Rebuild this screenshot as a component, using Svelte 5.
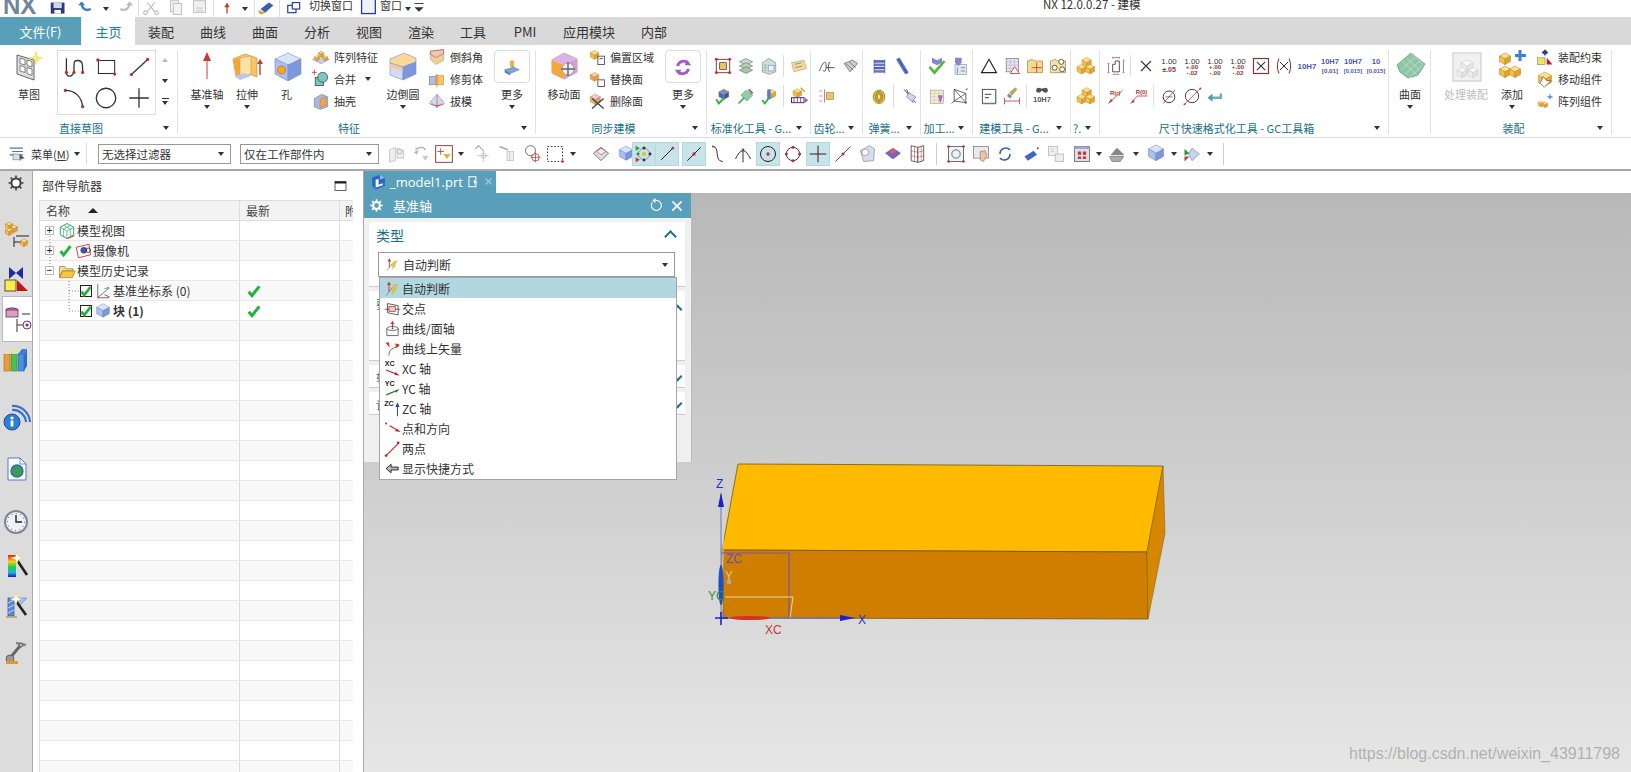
<script>
const P=(p,f,s='none',w=1)=>`<polygon points="${p}" fill="${f}" stroke="${s}" stroke-width="${w}"/>`;
const L=(d,s='#333',w=1.2)=>`<path d="${d}" fill="none" stroke="${s}" stroke-width="${w}"/>`;
const D=(x,y,r=1.5,c='#b5322c')=>`<circle cx="${x}" cy="${y}" r="${r}" fill="${c}"/>`;
const C=(x,y,r,f='none',s='#333',w=1.2)=>`<circle cx="${x}" cy="${y}" r="${r}" fill="${f}" stroke="${s}" stroke-width="${w}"/>`;
const R=(x,y,w,h,f='none',s='none',sw=1)=>`<rect x="${x}" y="${y}" width="${w}" height="${h}" fill="${f}" stroke="${s}" stroke-width="${sw}"/>`;
const T=(x,y,t,s=6,c='#333',b=700)=>`<text x="${x}" y="${y}" font-size="${s}" fill="${c}" font-weight="${b}" text-anchor="middle" font-family="Liberation Sans, sans-serif">${t}</text>`;
const cube=(x,y,s,t='#ffe08f',l='#f5c04a',r='#e6a42c',e='#b98a2e')=>
  P(`${x},${y-s*.55} ${x+s},${y} ${x},${y+s*.55} ${x-s},${y}`,t,e,.6)+
  P(`${x-s},${y} ${x},${y+s*.55} ${x},${y+s*1.55} ${x-s},${y+s}`,l,e,.6)+
  P(`${x+s},${y} ${x},${y+s*.55} ${x},${y+s*1.55} ${x+s},${y+s}`,r,e,.6);
const blue=(x,y,s)=>cube(x,y,s,'#d9e4fb','#a9bff0','#7c97e0','#6b80b8');
const star=(x,y,c='#f7ee6a')=>P(`${x},${y-6} ${x+1.5},${y-1.5} ${x+6},${y} ${x+1.5},${y+1.5} ${x},${y+6} ${x-1.5},${y+1.5} ${x-6},${y} ${x-1.5},${y-1.5}`,c,'#d8c840',.4);
const arrowUp=(x,y,h,c='#c23b36')=>L(`M${x} ${y+3}V${y+h}`,c,1.4)+P(`${x},${y} ${x+3},${y+5} ${x-3},${y+5}`,c);

const I={
 sketch:P('4,5 21,10 21,30 4,24','#dfdfdf','#666')+P('7,8 12,9.5 12,15 7,13.5','#fff','#666',.8)+P('14,10 19,11.5 19,17 14,15.5','#fff','#666',.8)+P('7,15.5 12,17 12,22.5 7,21','#fff','#666',.8)+P('14,17.5 19,19 19,25.5 14,23.5','#fff','#666',.8)+star(23,8)+L('M23 1v14M16 8h14','#f7ee6a',.8),
 spline:L('M5 4V17C5 22 12 22 12 14S12 6 16 6 20 10 20 17','#333',1.2)+D(5,17)+D(12,17)+D(20,17),
 rectd:R(5,6,15,12,'none','#333')+D(4.5,5.5)+D(20,18.5),
 lined:L('M5 19L20 5','#333')+D(5,19)+D(20,5),
 arcd:L('M4 5C13 5 19 11 20 20','#333')+D(4,5)+D(20,20),
 circle:C(12,12,9),
 cross:L('M12 3V21M3 12H21','#333'),
 datum:L('M16 10V29','#d98a85',1.6)+P('16,2 20,11 12,11','#c23b36'),
 extrude:P('2,9 14,4 26,8 26,27 18,24 5,26','#fbc468','#b98a2e',.6)+P('9,8 9,27 5,26 2,9','#f5a63b')+P('9,8 20,6 20,24 9,27','#fde1a8','#d49a3a',.6)+P('3,26 9,30 20,26 14,23','#b9c8ee')+arrowUp(29,9,16),
 hole:P('4,9 17,3 30,9 17,15','#d9e4fb','#7b8fc4',.6)+P('4,9 17,15 17,31 4,24','#a9bff0','#7b8fc4',.6)+P('30,9 17,15 17,31 30,24','#7c97e0','#7b8fc4',.6)+C(10.5,20,4,'#f5a623','#c57a12',.8),
 pattern:P('2,15 12,10 22,15 12,20','#c3d1f3','#7b8fc4',.6)+cube(12,7,3.2)+cube(7,12,3)+cube(17,12,3),
 unite:L('M4 1v6M1 4h6','#c23b36',1)+R(5,10,10,10,'#7fc4c0','#333',.8)+C(14,10,6,'#7fc4c0','#333',.8),
 shell:P('4,9 13,4 20,7 20,19 11,22 4,19','#aab8dd','#667',.6)+P('11,10 18,7 18,17 11,20','#f0a845','#a56',.4),
 blend:P('3,9 17,3 29,8 29,12 16,17 3,13','#f9d89a','#7b8fc4',.6)+P('3,13 16,17 16,30 3,25','#d3dcf6','#7b8fc4',.6)+P('16,17 29,12 29,24 16,30','#7c97e0','#7b8fc4',.6)+P('3,14 16,18 16,21 3,17','#f5c78a'),
 chamfer:P('4,5 20,3 20,8 11,13 4,9','#f3c3b4','#a55')+P('4,9 11,13 20,8 20,16 11,21 4,15','#f5d08b','#7b8fc4',.6),
 trim:R(3,9,7,10,'#a9bff0','#667',.6)+R(10,8,10,11,'#fbc468','#b98a2e',.6)+L('M12 6V22','#c23b36',.7),
 draft:P('12,4 20,13 12,20 4,13','#cfd8f3','#7b8fc4',.7)+L('M3 15Q12 20 21 15','#c23b36',1)+L('M12 4V20','#c23b36',.7),
 more1:R(10,5,4,7,'#f5a33b')+P('4,15 14,12 20,15 10,19','#78a7db','#4c6fa0',.5)+P('4,15 10,19 10,21 4,18','#4c80bd'),
 movef:P('4,10 16,3 29,9 29,22 16,29 4,23','#f8d890','#c8902a',.8)+P('4,10 16,15 16,29 4,23','#f5a83e')+P('16,3 29,9 16,15 4,10','#dcb0e8')+P('16,15 29,9 29,22 16,29','#d39cdd')+C(20,19,6,'#efefef','#888',.6)+L('M13 19h14M20 12v14','#666',1.4),
 offreg:cube(9,7,5)+R(13,11,8,10,'#fff','#444')+L('M15 14h4','#333',1),
 replf:cube(9,7,5,'#f6d3a8','#f39a6a')+R(13,13,8,8,'#fff','#444'),
 delf:cube(10,7,6,'#e8c9e8','#f5b454','#d99')+L('M6 9L20 21M20 9L6 21','#444',1.6),
 more2:L('M6 11A7 7 0 0 1 18 8','#a35ac8',3)+L('M18 14A7 7 0 0 1 6 17','#a35ac8',3)+P('16,4 21,10 14,10','#a35ac8')+P('8,21 3,15 10,15','#a35ac8'),
 t1:R(4,4,16,16,'none','#9a3a36',1.2)+R(8,8,8,8,'#f2c35a','#333',.8)+D(4,4,1.7)+D(20,4,1.7)+D(4,20,1.7)+D(20,20,1.7),
 t2:P('4,7 12,3 20,7 12,11','#c7dcc4','#667',.7)+P('4,12 12,8 20,12 12,16','#b5d0b2','#667',.7)+P('4,17 12,13 20,17 12,21','#a5c7a3','#667',.7),
 t3:P('4,8 12,3 20,8 20,19 12,22 4,19','#cfe0dc','#678',.7)+R(11,11,7,7,'#e7f0ff','#678',.6)+L('M6 11h3M6 14h3M6 17h3','#678',.7),
 t4:P('3,8 18,5 21,15 6,19','#f4da98','#998',.7)+L('M7 10l8-2M8 14l8-2','#777',.9),
 t5:cube(13,7,6,'#6b8fe0','#3f66c8','#2f54b0')+L('M4 16l3 5 6-6','#2fb344',2.4),
 t6:P('12,5 20,11 13,18 6,11','#8bd39a','#667',.6)+L('M15 4l5 5','#8b5ca8',2.4)+L('M3 21l7-7','#45a860',2),
 t7:cube(15,7,5)+P('10,4 14,4 14,16 10,16','#4e7bd6')+L('M4 17l3 4 5-7','#2fb344',2.2),
 t8:cube(10,6,5)+R(3,14,15,6,'#fff','#54267a',1.2)+L('M6 14v6M10 14v6M14 14v6','#54267a',.9)+P('19,14 23,17 19,20','#a64cc8')+L('M14 2l5 5','#b83',1.4),
 g1:L('M3 18C8 4 11 6 11 12S9 20 7 17M11 14H21M15 7C13 12 13 16 15 19','#444',1.1),
 g2:P('5,9 15,5 21,9 12,19','#cfcfcf','#555',.8)+L('M7 9l9 8M11 7l8 7','#555',.8),
 g3:L('M3 6h3M3 12h3M3 18h3M9 4V20','#c23b36',.8)+R(11,8,9,8,'#e8c26e','#98773a',.7),
 s1:R(6,5,13,3,'#4d63b3')+R(6,9,13,3,'#6478c9')+R(6,13,13,3,'#4d63b3')+R(6,17,13,3,'#6478c9')+L('M6 4V21M19 4V21','#334',.6),
 s2:L('M7 3L18 21','#6478c9',5)+L('M7 3L18 21','#2d3f8a',1),
 s3:`<ellipse cx="12" cy="13" rx="7" ry="8" fill="#e4c33b" stroke="#8d7722"/><ellipse cx="12" cy="13" rx="4" ry="6" fill="#c9a726" stroke="#8d7722"/><ellipse cx="12" cy="13" rx="1.6" ry="3" fill="#fff7c9" stroke="#8d7722" stroke-width=".6"/>`,
 s4:L('M6 4L20 20M9 4L17 20','#445',1.1)+P('12,8 20,13 16,19 9,13','#cfd8f3','#5a74b5',.8),
 m1:P('6,2 12,5 18,2 18,8 12,11 6,8','#8a85c9')+L('M3 13l6 7L21 6','#55b83d',3.2),
 m2:R(6,10,14,12,'#dfe8f2','#889',.7)+P('6,2 14,2 14,8 10,12 6,8','#8a85c9')+L('M9 14v7M13 14h5M13 18h5','#667',.8),
 m3:R(4,5,16,16,'#f3efd0','#999',.7)+L('M4 9h16M4 13h16M4 17h16M9 5v16M14 5v16','#c5bf9c',.6)+P('13,11 19,11 16,21','#a564c8'),
 m4:P('5,4 5,18 19,20 19,9','none','#445')+L('M5 4L19 20M5 18L19 9','#445',.9)+L('M19 5l2-2','#2fa34a',1.4)+L('M5 18L2 21','#c23b36',1.2)+D(19,20,1.2),
 b1:P('12,4 21,20 3,20','none','#222',1.4),
 b2:R(5,3,15,16,'#e4e4ef','#66709a',.8)+L('M5 7h15M5 11h15M5 15h15M10 3v16M15 3v16','#a2a6c5',.5)+P('15,13 21,21 10,21','#fff','#c23b36',1),
 b3:P('3,6 9,4 11,6 21,6 21,20 3,20','#f4d98f','#9a8233',.8)+L('M14 8V20M8 14H20','#c23b36',1),
 b4:P('3,6 9,4 11,6 21,6 21,20 3,20','#f4e4a0','#9a8233',.8)+C(16,7,3,'#fff','#444',1)+C(8,14,3,'#fff','#444',1)+C(17,16,3,'#fff','#444',1),
 b5:R(4,4,16,17,'#fff','#333',1)+L('M7 10h8M7 14h5','#333',1.1)+L('M4 21h16M20 4v17','#777',1.6),
 b6:L('M3 14V22M21 14V22M3 18H21','#c23b36',1)+P('9,8 16,2 18,4 12,11','#c9a34b','#777',.5)+P('8,9 12,12 10,15 6,12','#888'),
 b7:`<circle cx="8" cy="5" r="3" fill="#555"/><circle cx="16" cy="5" r="3" fill="#555"/>`+R(7,3,10,3,'#555')+T(12,19,'10H7',9,'#556'),
 cubes:cube(14,5,5.5)+cube(8,13,5.5)+cube(18,13,5.5),
 d0:L('M8 10v9h8v-13h-5v4z','#333',1)+L('M3 9V20M2 9h2M2 20h2M21 5V20M20 5h2M20 20h2M8 2h8M8 1v2M16 1v2M8 22h8','#b5322c',.8),
 xx:L('M6 6L18 18M18 6L6 18','#333',1.3),
 tol1:T(12,10,'1.00',9.5,'#333',400)+T(12,19,'±.05',8.5,'#8a3a36',700),
 tol2:T(12,9,'1.00',9.5,'#333',400)+T(12,16,'+.00',7.5,'#8a3a36',700)+T(12,23,'-.02',7.5,'#8a3a36',700),
 tol3:T(12,9,'1.00',9.5,'#333',400)+T(12,16,'+.00',7.5,'#8a3a36',700)+T(12,23,'-.00',7.5,'#555',700),
 boxx:R(3,3,18,18,'#fff','#8e2f2b',1.4)+L('M7 7L17 17M17 7L7 17','#333',1.3),
 parx:L('M6 3Q2 12 6 21M18 3Q22 12 18 21','#8e2f2b',1.2)+L('M7 7L17 17M17 7L7 17','#333',1.2),
 h1:T(12,16,'10H7',9.5,'#4a57b5'),
 h2:T(12,10,'10H7',9,'#4a57b5')+T(12,20,'[0,01]',7.5,'#4a57b5'),
 h3:T(12,10,'10H7',9,'#4a57b5')+T(12,20,'[0,015]',7,'#4a57b5'),
 h4:T(12,10,'10',9,'#4a57b5')+T(12,20,'[0,015]',7,'#4a57b5'),
 f1:L('M3 21L20 5','#c23b36',1)+T(11,11,'R(r)',7,'#a33')+P('3,21 8,18 6,15','#c23b36'),
 f2:L('M2 21L10 12H22','#c23b36',1)+T(15,10,'R(0)',7,'#a33')+P('2,21 7,19 5,16','#c23b36'),
 f3:C(12,13,7,'none','#444')+L('M5 21L19 5','#c23b36',1)+L('M8 13h8','#444',.8),
 f4:C(12,12,8,'none','#444')+L('M3 22L22 3','#c23b36',1)+D(3,22,1.2)+D(22,3,1.2),
 f5:L('M19 9V14H8','#6fb0b5',3)+P('3,14 9,9 9,19','#4f9ea3'),
 surf:P('3,15 17,3 31,14 24,25 14,28 6,22','#8ec7a6','#5b8d6f',.7)+L('M8 11l15 14M12 7.5l14 13M17 3l12 11M7 20L21 7M11 24L26 11M15 28L29 15','#c9e4d3',.7),
 proc:R(3,3,28,28,'#f1f1f1','#cfcfcf',1.2)+cube(17,13,6,'#f7f7f7','#eee','#e4e4e4','#cfcfcf')+cube(12,20,5,'#f7f7f7','#eee','#e4e4e4','#cfcfcf')+cube(23,20,5,'#f7f7f7','#eee','#e4e4e4','#cfcfcf'),
 add:cube(9,6,5.5)+cube(9,19,5.5)+cube(19,19,5.5)+L('M24 0V11M19 5.5H30','#3b82d6',3),
 constr:P('12,3 12,10 8,6.5','#2a3a9c')+P('12,3 12,10 16,6.5','#2a3a9c')+L('M12 3V11','#555',.8)+R(3,13,9,8,'#f2e45c','#777',.7)+P('14,13 21,21 14,21','#c21c1c'),
 movec:cube(12,8,8)+P('10,9 14,14 19,14 14,19 11,22 6,17','#fff','#333',.7),
 arrc:cube(7,14,3.2)+cube(12,15,3.2)+L('M18 4v6M15 7h6','#3b82d6',1.3),
 menu:L('M2 5H18M5 9H18M2 13H18','#52798f',1.4)+R(6,12,8,7,'#d6e1ec','#52798f',.7)+P('14,12 20,17 16,18 15,21','#555'),
 fa:P('3,7 10,4 10,20 3,22','#eee','#aaa',.7)+P('12,5 20,8 20,17 12,17','#eee','#aaa',.7)+C(15,9,3,'none','#aaa',.9),
 fb:L('M4 7C8 3 14 3 16 7','#aaa',1.6)+P('12,14 20,14 16,20','#ccc')+P('2,10 8,7 6,13','#bbb'),
 fc:R(2,2,20,20,'#fff','#8e2f2b',1.1)+L('M8 5v8M4 9h8','#c23b36',1)+P('11,12 20,12 15.5,18','#e6b43a'),
 fd:L('M5 6L9 2L15 8','#aaa',1.5)+L('M15 8V21M8 14H21','#bbb',1)+C(15,14,3,'none','#bbb',.9),
 fe:L('M3 3l10 4','#aaa',2)+R(12,9,8,11,'#eee','#bbb',.8)+L('M15 9v11','#bbb',.7),
 ff:C(9,8,6,'none','#555',1)+C(15,16,4.5,'#fff','#c23b36',1)+L('M15 10V22M9 16H21','#c23b36',.9),
 dash:`<rect x="3" y="3" width="18" height="18" fill="none" stroke="#333" stroke-width="1.1" stroke-dasharray="2 2"/>`+D(21,21,1.6),
 view:P('3,11 12,4 21,11 12,20','#ddd','#666')+P('7,9 12,5 18,9 12,13','#eee','#a33',.6),
 cubeb:blue(12,7,8),
 snap1:P('12,3 21,12 12,21 3,12','none','#666',.8)+D(12,5,1.7,'#333')+D(5,12,1.7,'#2a9a3a')+D(19,12,1.7,'#333')+D(12,19,1.7,'#333')+D(12,12,2.4,'#e6c31e')+P('2,2 7,5 2,8','#2a9a3a')+P('2,16 7,19 2,22','#c23b36'),
 snap2:L('M5 19L19 5','#222')+D(19,5,1.6),
 snap3:L('M4 20L20 4','#222')+D(12,12,2),
 snap4:L('M7 3C16 3 8 21 19 21','#333')+D(7,3,1.1),
 snap5:L('M3 18Q12 -2 21 18','#333')+L('M12 6V22','#333')+D(12,7,1.6),
 snap6:C(12,12,9,'none','#222')+D(12,12,2),
 snap7:C(12,12,8,'none','#333')+D(12,4,1.8)+D(4,12,1.8)+D(20,12,1.8)+D(12,20,1.8),
 snap8:L('M12 2V22M2 12H22','#222')+D(12,12,1.5),
 snap9:L('M3 21L21 3','#555')+D(12,12,1.8),
 sa:P('4,8 15,2 21,6 20,20 8,21','#cfe0f3','#667',.6)+C(10,10,4,'#fff','#c23b36',.6),
 sb:P('3,11 12,5 21,11 12,18','#7b5fc4','#555',.6)+P('8,9 13,6 16,9 11,12','#d95f5f'),
 sc:P('5,2 13,4 13,22 5,20','#fff','#444')+P('13,4 20,2 20,20 13,22','#fff','#444')+L('M5 8L13 10L20 8M5 14L13 16L20 14M9 3V21M17 3V21','#a33',.6),
 va:R(3,3,18,18,'#eef2f7','#555',1)+C(12,12,5,'none','#556',1)+D(3,3)+D(21,3)+D(3,21)+D(21,21),
 vb:R(3,3,18,14,'#e8eaf0','#888')+P('11,9 17,8 19,14 15,21 11,19','#e8c49f','#a87'),
 vc:L('M6 12A7 7 0 0 1 18 7','#3e63ad',2)+L('M18 12A7 7 0 0 1 6 17','#3e63ad',2),
 vd:P('3,15 14,8 18,13 7,20','#3f66c8')+D(19,5,1.2),
 ve:R(3,3,11,11,'#f0f0f0','#bbb')+R(11,12,10,9,'#eee','#bbb')+L('M5 6h5M5 9h5','#bbb',.8),
 vf:R(3,3,18,18,'#dfdfee','#666')+R(3,3,18,3,'#9fa8d6')+R(7,9,4,4,'#c23b36')+R(13,9,4,4,'#c23b36')+R(7,15,4,3,'#c23b36')+R(13,15,4,3,'#c23b36'),
 vg:P('5,13 12,5 20,13','#888','#555',.6)+P('3,15 20,15 16,21 6,21','#aaa','#555',.6),
 vh:blue(12,6,9),
 vi:P('12,5 21,12 12,20 8,12','#c6d3f2','#667',.6)+P('3,6 9,11 3,14','#2a9a3a')+P('3,15 9,15 3,21','#c23b36'),
 save:R(3,0,15,12,'#2b3a77')+R(6,0,9,6,'#cfd8ea')+R(7,8,7,4,'#fff'),
 undo:L('M5 0C5 6 9 10 15 7','#3a78c9',2.6)+P('1,3 9,3 5,-1','#3a78c9'),
 redo:L('M18 0C18 6 14 10 8 7','#bbb',2.4)+P('22,3 14,3 18,-1','#bbb'),
 cut:L('M8 0L16 10M16 0L8 10','#bbb',1.2)+C(6,11,2,'none','#bbb')+C(18,11,2,'none','#bbb'),
 copy:R(6,-2,9,12,'#f3f3f3','#bbb')+R(9,1,9,12,'#f3f3f3','#bbb'),
 paste:R(5,-2,13,13,'#f0f0f0','#bbb')+L('M8 6h7M8 9h7','#bbb',.9),
 redar:arrowUp(12,0,12),
 paint:P('5,7 14,0 19,3 10,11','#3c5fa8')+P('3,8 10,11 7,13 3,12','#d9a544'),
 winsw:R(3,3,9,8,'#fff','#22409a',1.3)+R(8,0,8,7,'#fff','#22409a',1.3),
 win:R(5,-6,15,18,'#eef2fb','#1e3bb0',1.4),
 custom:L('M7 1h10','#333',1)+P('7,5 17,5 12,10','#333'),
 gear:C(12,12,5.5,'#fff','#444',2.4)+L('M12 3v3M12 18v3M3 12h3M18 12h3M5.6 5.6l2 2M16.4 16.4l2 2M18.4 5.6l-2 2M7.6 16.4l-2 2','#444',2),
 rcubes:cube(7,4,3.5)+cube(12,7,3.5)+cube(7,10,3.5)+L('M14 16h13M12 17v10M12 22h7','#222',1)+cube(22,21,3.5),
 rcons:P('7,3 14,9 7,15','#1b2e9b')+P('21,3 14,9 21,15','#1b2e9b')+R(3,16,11,11,'#f7ed4f','#333',.8)+P('15,16 26,27 15,27','#c21616'),
 rnav:`<ellipse cx="8" cy="5" rx="6" ry="2" fill="#c586a8" stroke="#6a2a5a"/>`+R(2,5,12,7,'#d8a0c0','#6a2a5a',.8)+L('M18 9h8M13 14v13M13 20h7','#333',1)+C(23,20,4,'#fff','#7a2a8a',1)+D(23,20,1.6,'#7a2a8a'),
 rbook:R(2,7,6,17,'#f09a3c','#a86a20',.6)+R(9,7,6,17,'#4ec04e','#2a8a2a',.6)+R(16,7,6,17,'#4d90e0','#2a60a0',.6)+P('2,7 6,2 11,2 8,7','#eadfc0')+P('9,7 13,2 18,2 15,7','#d9eaa0')+P('16,7 20,2 25,2 22,7','#3a80d0')+P('22,7 25,2 25,19 22,24','#2f6fc0'),
 rinfo:C(10,18,8,'#2b7fd8','#1a4f98',1)+`<circle cx="10" cy="14" r="1.6" fill="#fff"/>`+R(8.6,16.5,2.8,6,'#fff')+L('M10 6A13 13 0 0 1 24 18M10 2A17 17 0 0 1 28 18','#3b6fce',2.2),
 rdoc:P('6,3 18,3 24,9 24,25 6,25','#fff','#4a7ad0',1)+L('M18 3v6h6','#4a7ad0',.8)+C(15,16,6,'#3d9a52','#2a6cb8',1.4),
 rclock:C(14,14,11,'#eef1f6','#7c8696',2)+L('M14 7V14H20','#222',1.4)+`<circle cx="14" cy="14" r="8.5" fill="none" stroke="#555" stroke-dasharray="1 3.4"/>`,
 rrain:`<defs><linearGradient id="rg" x1="0" y1="0" x2="0" y2="1"><stop offset="0" stop-color="#e02020"/><stop offset=".3" stop-color="#f6d020"/><stop offset=".55" stop-color="#20d040"/><stop offset=".8" stop-color="#20b0e0"/><stop offset="1" stop-color="#1020c0"/></linearGradient></defs>`+R(6,3,8,22,'url(#rg)')+L('M15 8L25 23','#222',2.6)+star(15,6,'#fff'),
 rmill:R(6,5,6,18,'#5b88d6','#2a57a8',.7)+L('M6 10l6-3M6 15l6-3M6 20l6-3','#c7dcf6',1)+P('12,5 25,5 17,13','#a8c0e8','#5b88d6',.7)+L('M4 24h11','#b6a24a',1.4)+L('M14 8L24 22','#222',2.6)+star(14,6,'#fff'),
 rrobot:L('M8 21L18 9','#666',3)+L('M14 6L24 8','#888',2.4)+C(8,22,4,'#999','#555',.8)+R(4,24,12,3,'#e8962a')+C(19,8,2,'#bbb','#444',.8),
 maxi:R(1,3,22,18,'#fff','#222',1.4)+R(1,3,22,4,'#222'),
 tv:P('12,2 21,7 21,17 12,22 3,17 3,7','none','#2f9e6a',1.3)+L('M3 7L12 12L21 7M12 12V22M7.5 4.5L16.5 9.5V19.5M16.5 4.5L7.5 9.5V19.5','#2f9e6a',.9)+L('M13 22L22 18','#d9502a',1.4),
 ck:L('M4 13l5 6L20 5','#23b33c',4.6),
 cam:P('3,7 20,3 22,17 6,21','none','#c23b36',1.2)+C(13,11,4,'#4a55a8','#223',.6)+C(19,11,3,'none','#222',1),
 fold:P('2,6 9,6 11,9 20,9 20,12 6,12 2,20','#f7dc8a','#8a6a1a',.8)+P('6,12 23,12 19,21 2,21','#f6c544','#8a6a1a',.8),
 csys:L('M5 3V21H20','#333',.9)+L('M5 21L20 8','#333',.9)+L('M14 17L21 20','#c23b36',1.2)+L('M14 9L20 7','#2fa34a',1.2),
 bl:blue(12,7,8.5),
 a_auto:arrowUp(7,2,15)+L('M3 22L12 10','#777',1)+P('14,7 20,6 15,13 18,13 11,20 13,14 10,14','#e9c73a','#b39522',.4),
 a_cross:L('M1 13H23','#333',1)+P('5,5 20,8 20,21 5,18','none','#333',1.1)+R(7,9,9,7,'#f2c7c2','#a33',1),
 a_cyl:arrowUp(12,1,10)+L('M4 12V22H20V12','#333',1)+`<ellipse cx="12" cy="12" rx="8" ry="2.8" fill="none" stroke="#333"/>`+D(12,12,1.2),
 a_curve:L('M7 22C7 13 12 12 22 8','#a33',1.2)+P('2,4 7,3 8,11','#c23b36')+P('22,6 16,5 17,12','#c23b36'),
 a_xc:T(8,8,'XC',10,'#222')+L('M3 14L18 20','#b22',1.6)+P('22,22 16,17 15,21','#b22'),
 a_yc:T(8,8,'YC',10,'#222')+L('M3 21L18 15','#297a29',1.6)+P('22,13 16,14 17,18','#297a29'),
 a_zc:T(7,8,'ZC',10,'#222')+L('M19 8V23','#2648b0',1.4)+P('19,3 16,10 22,10','#2648b0'),
 a_pd:L('M8 8L20 15','#b22',1.6)+P('24,17 17,12 16,16','#b22')+D(3,5,1.5),
 a_two:L('M4 21L20 5','#b22',1.5)+D(3,22,2)+D(20,4,2),
 a_back:P('3,12 10,6 10,10 20,10 20,14 10,14 10,18','#bbb','#222',1.3),
 refresh:L('M7 7A8 8 0 1 0 12 4','#fff',1.8)+P('12,0 12,8 7,4','#fff'),
 closex:L('M5 5L19 19M19 5L5 19','#fff',2.4),
 dgear:C(12,12,5.5,'none','#fff',3.2)+L('M12 2v4M12 18v4M2 12h4M18 12h4M5 5l3 3M16 16l3 3M19 5l-3 3M8 16l-3 3','#fff',2.6),
 tabcube:P('3,5 14,1 21,5 21,17 8,22 3,17','#2868c8')+P('8,8 12,7 12,15 18,13 18,16 8,19','#fff')+P('14,1 21,5 14,8','#8fb8ee'),
 doc:R(5,3,12,17,'#5a9fb9','#fff',1.8)+P('13,8 20,13 15,13 14,18','#fff'),
 x:L('M5 5L17 17M17 5L5 17','#a9c8d4',2.2),
};
const tabs=[['主页',53,true],['装配',52],['曲线',52],['曲面',52],['分析',52],['视图',52],['渲染',52],['工具',52],['PMI',52],['应用模块',76],['内部',54]];
const top=[['save',59],['undo',88],['c',106],['redo',124],['|',138],['cut',151],['copy',176],['paste',200],['|',213],['redar',227],['c',245],['|',254],['paint',267],['|',279],['winsw',296],['t:切换窗口',331],['win',368],['t:窗口',391],['c',408],['custom',419]];
const placed=(list,start)=>{let x=start;return list.map(([n,cx,a])=>{const wd=n==='c'?10:n==='|'?1:n.startsWith('t:')?(n.length>4?44:22):22;const m=cx-wd/2-x;x=cx+wd/2;return {n,a,wd,m};});};
const topItems=placed(top,38);
const tools=[['fa',397],['fb',422],['fc',444],['c',461],['fd',481],['fe',507],['ff',533],['dash',555],['c',573],['view',601],['cubeb',626],['snap1',644,1],['snap2',667,1],['snap3',693.5,1],['snap4',717],['snap5',743],['snap6',767.5,1],['snap7',793],['snap8',818,1],['snap9',843],['sa',867],['sb',893],['sc',917],['|',936],['va',956],['vb',981],['vc',1005],['vd',1032],['ve',1056],['vf',1082],['c',1099],['vg',1117],['c',1136],['vh',1155.5],['c',1174],['vi',1192],['c',1210],['|',1223]];
const toolItems=placed(tools,379);
const rail=[['gear',24,-4],['rcubes',32,19],['rcons',32,12],['rnav',32,2,1],['rbook',32,3],['rinfo',32,25],['rdoc',32,19],['rclock',32,21],['rrain',32,12],['rmill',32,9],['rrobot',32,12]];
const tree=[
 {lv:0,exp:'+',ic:['tv'],t:'模型视图'},
 {lv:0,exp:'+',ic:['ck','cam'],t:'摄像机'},
 {lv:0,exp:'-',ic:['fold'],t:'模型历史记录'},
 {lv:1,box:1,ic:['csys'],t:'基准坐标系 (0)',ok:1},
 {lv:1,box:1,ic:['bl'],t:'块 (1)',ok:1,b:1},
];
const menuItems=[['a_auto','自动判断'],['a_cross','交点'],['a_cyl','曲线/面轴'],['a_curve','曲线上矢量'],['a_xc','XC 轴'],['a_yc','YC 轴'],['a_zc','ZC 轴'],['a_pd','点和方向'],['a_two','两点'],['a_back','显示快捷方式']];
const rows=Array.from({length:28},(_,i)=>tree[i]||null);
const dims1=['xx','tol1','tol2','tol3','tol2','boxx','parx','h1','h2','h3','h4'];
</script>

{#snippet icon(n,s=20)}<svg class="ic" width={s} height={s} viewBox="0 0 24 24">{@html I[n]}</svg>{/snippet}
{#snippet bigi(n,s=32)}<svg class="ic" width={s} height={s} viewBox="0 0 32 32">{@html I[n]}</svg>{/snippet}
{#snippet caret()}<span class="caret"></span>{/snippet}
{#snippet big(n,label,cls='w40',arrow=true)}
 <div class="big {cls}"><div class="bigicon">{@render bigi(n)}</div><div class="lbl">{label}</div>{#if arrow}{@render caret()}{/if}</div>
{/snippet}
{#snippet more(n)}
 <div class="big w36"><div class="morebox">{@render icon(n,22)}</div><div class="lbl">更多</div>{@render caret()}</div>
{/snippet}
{#snippet col(items,cls='')}
 <div class="col {cls}">
 {#each items as [n,t,c]}<div class="sm">{@render icon(n,20)}<span>{t}</span>{#if c}<span class="caret inl"></span>{/if}</div>{/each}
 </div>
{/snippet}
{#snippet grid(a,b)}
 <div class="igrid">
 {#each [a,b] as r}<div class="irow">{#each r as n}{#if n==='|'}<i class="isep"></i>{:else}<div class="cell">{@render icon(n,20)}</div>{/if}{/each}</div>{/each}
 </div>
{/snippet}
{#snippet title(t)}<div class="stitle"><span>{t}</span>{@render caret()}</div>{/snippet}

<div class="app">
 <div class="qbar">
  <div class="nx">NX</div>
  {#each topItems as it}
   <div class="qi" style:margin-left="{it.m}px" style:width="{it.wd}px">
    {#if it.n==='c'}<span class="caret"></span>
    {:else if it.n==='|'}<i class="qsep"></i>
    {:else if it.n.startsWith('t:')}<span class="qt">{it.n.slice(2)}</span>
    {:else}<svg class="ic" width="22" height="14" viewBox="0 0 24 14">{@html I[it.n]}</svg>{/if}
   </div>
  {/each}
  <div class="wtitle">NX 12.0.0.27 - 建模</div>
 </div>

 <div class="tabs">
  <div class="filetab">文件(F)</div>
  <div class="tabgap"></div>
  {#each tabs as [t,w,a]}<div class="tab" class:on={a} style:width="{w}px">{t}</div>{/each}
 </div>

 <div class="ribbon">
  <section class="sec s1">
   <div class="body">
    {@render big('sketch','草图','w40',false)}
    <div class="gallery">{#each ['spline','rectd','lined','arcd','circle','cross'] as n}<div>{@render icon(n,26)}</div>{/each}</div>
    <div class="scroll"><span class="up"></span><span class="caret"></span><span class="caret bar"></span></div>
   </div>
   {@render title('直接草图')}
  </section>
  <section class="sec s2">
   <div class="body">
    {@render big('datum','基准轴')}{@render big('extrude','拉伸')}{@render big('hole','孔','w39',false)}
    {@render col([['pattern','阵列特征'],['unite','合并',1],['shell','抽壳']],'c44')}
    {@render big('blend','边倒圆')}
    {@render col([['chamfer','倒斜角'],['trim','修剪体'],['draft','拔模']],'c33')}
    {@render more('more1')}
   </div>
   {@render title('特征')}
  </section>
  <section class="sec s3">
   <div class="body">
    {@render big('movef','移动面','w40',false)}
    {@render col([['offreg','偏置区域'],['replf','替换面'],['delf','删除面']],'c44b')}
    {@render more('more2')}
   </div>
   {@render title('同步建模')}
  </section>
  <section class="sec s4"><div class="body">{@render grid(['t1','t2','t3','|','t4'],['t5','t6','t7','|','t8'])}</div>{@render title('标准化工具 - G...')}</section>
  <section class="sec s5"><div class="body">{@render grid(['g1','g2'],['g3'])}</div>{@render title('齿轮...')}</section>
  <section class="sec s5b"><div class="body">{@render grid(['s1','s2'],['s3','|','s4'])}</div>{@render title('弹簧...')}</section>
  <section class="sec s5"><div class="body">{@render grid(['m1','m2'],['m3','m4'])}</div>{@render title('加工...')}</section>
  <section class="sec s8"><div class="body">{@render grid(['b1','b2','b3','b4'],['b5','b6','|','b7'])}</div>{@render title('建模工具 - G...')}</section>
  <section class="sec s9"><div class="body">{@render grid(['cubes'],['cubes'])}</div>{@render title('?..')}</section>
  <section class="sec s10"><div class="body">{@render grid(['d0','|',...dims1],['f1','f2','|','f3','f4','f5'])}</div>{@render title('尺寸快速格式化工具 - GC工具箱')}</section>
  <section class="sec s11"><div class="body">{@render big('surf','曲面','w42')}</div></section>
  <section class="sec s12">
   <div class="body">
    <div class="big w56 dim"><div class="bigicon">{@render bigi('proc')}</div><div class="lbl">处理装配</div></div>
    {@render big('add','添加','w36')}
    {@render col([['constr','装配约束'],['movec','移动组件'],['arrc','阵列组件']],'c44c')}
   </div>
   {@render title('装配')}
  </section>
 </div>

 <div class="toolbar">
  <div class="tmenu">{@render icon('menu',20)}<span>菜单(<u>M</u>)</span><span class="caret"></span></div>
  <i class="tsep"></i>
  <div class="sel s-a"><span>无选择过滤器</span><span class="caret"></span></div>
  <div class="sel s-b"><span>仅在工作部件内</span><span class="caret"></span></div>
  {#each toolItems as it}
   <div class="ti" class:act={it.a} style:margin-left="{it.m}px" style:width="{it.wd}px">
    {#if it.n==='c'}<span class="caret"></span>{:else if it.n==='|'}<i class="tline"></i>{:else}{@render icon(it.n,20)}{/if}
   </div>
  {/each}
 </div>

 <div class="work">
  <aside class="rail">
   {#each rail as [n,s,g,a]}
    <div class="ri" class:act={a} style:margin-top="{g}px">{#if s===24}{@render icon(n,20)}{:else}<svg class="ic" width="28" height="28" viewBox="0 0 28 28">{@html I[n]}</svg>{/if}</div>
   {/each}
  </aside>
  <div class="nav">
   <div class="navhead"><span>部件导航器</span><svg class="ic" width="13" height="12" viewBox="0 0 24 24">{@html I.maxi}</svg></div>
   <div class="table">
    <div class="thead"><div class="c1">名称<span class="sortup"></span></div><div class="c2">最新</div><div class="c3">附</div></div>
    {#each rows as r}
     <div class="tr">
      <div class="c1">
       {#if r}
        <div class="node" class:l1={r.lv}>
         {#if r.exp}<span class="exp">{r.exp==='+'?'+':'−'}</span>{/if}
         {#if r.box}<span class="cbox">{@render icon('ck',14)}</span>{/if}
         {#each r.ic as n}{@render icon(n,n==='ck'?15:n==='cam'?18:18)}{/each}
         <span class:bold={r.b}>{r.t}</span>
        </div>
       {/if}
      </div>
      <div class="c2">{#if r&&r.ok}{@render icon('ck',16)}{/if}</div>
      <div class="c3"></div>
     </div>
    {/each}
    <svg class="links" width="60" height="110" viewBox="0 0 60 110"><path d="M10 15V50M29 60V90M29 70H41M29 90H41" fill="none" stroke="#888" stroke-dasharray="1 2"/></svg>
   </div>
  </div>
  <main class="view">
   <svg class="scene" viewBox="364 171 1267 601" width="1267" height="601">
    <polygon points="738,464 1163,466 1147,552 722,550" fill="#ffba00" stroke="#6b5a20" stroke-width=".8"/>
    <polygon points="722,550 1147,552 1148,619 723,618" fill="#d07e00" stroke="#6b5a20" stroke-width=".8"/>
    <polygon points="1163,466 1165,533 1148,619 1147,552" fill="#d58700" stroke="#8a6a20" stroke-width=".6"/>
    <path d="M724 503L723 550L722 610" stroke="#f3d59c" fill="none"/>
    <path d="M721 553H789V618" stroke="#6a4fc4" fill="none" stroke-width="1.2" opacity=".9"/>
    <path d="M725 597H793L790 618" stroke="#f1d7a0" fill="none"/>
    <path d="M721 494V618" stroke="#5b7be0" fill="none"/>
    <polygon points="721,492 718,507 724,507" fill="#1a22d0"/>
    <path d="M721 618H855" stroke="#5b6be0" fill="none"/>
    <polygon points="855,618 840,615 840,621" fill="#1a22d0"/>
    <path d="M715 618H728M721 612V625" stroke="#1a22d0" stroke-width="1.6"/>
    <ellipse cx="721" cy="585" rx="2.6" ry="20" fill="#1a50c8"/>
    <ellipse cx="750" cy="618" rx="20" ry="2" fill="#d5302a"/>
    <circle cx="729" cy="582" r="2.4" fill="#aaa"/>
    <text x="716" y="488" class="ax" fill="#2a2ad0">Z</text>
    <text x="726" y="563" class="ax" fill="#5a50c8">ZC</text>
    <text x="725" y="580" class="ax" fill="#d8c49a">Y</text>
    <text x="708" y="600" class="ax" fill="#2f8f3f">YC</text>
    <text x="765" y="634" class="ax" fill="#c23b36">XC</text>
    <text x="858" y="624" class="ax" fill="#2a2ad0">X</text>
   </svg>
   <div class="file">
    <div class="ftab">{@render icon('tabcube',17)}<span>_model1.prt</span>{@render icon('doc',14)}{@render icon('x',12)}</div>
   </div>
   <div class="dialog">
    <div class="dhead">{@render icon('dgear',15)}<span>基准轴</span><div class="dbtns">{@render icon('refresh',15)}{@render icon('closex',16)}</div></div>
    <div class="card c-a"><div class="chead"><span>类型</span><span class="chev"></span></div>
     <div class="combo">{@render icon('a_auto',15)}<span>自动判断</span><span class="caret"></span></div>
    </div>
    <div class="card c-b"><span class="peek">要定义轴的对象</span><span class="chev small"></span></div>
    <div class="card c-c"><span class="peek">轴方位</span><span class="chev small down"></span></div>
    <div class="card c-d"><span class="peek">设置</span><span class="chev small down"></span></div>
   </div>
   <div class="menu">
    {#each menuItems as [n,t],i}<div class="mi" class:hl={i===0}>{@render icon(n,17)}<span>{t}</span></div>{/each}
   </div>
   <div class="mark">https://blog.csdn.net/weixin_43911798</div>
  </main>
 </div>
</div>

<style>
:global(body){margin:0;background:#fff}
.app{width:1631px;height:772px;overflow:hidden;display:flex;flex-direction:column;font-family:"Noto Sans CJK SC","Noto Sans",sans-serif;font-size:11px;color:#333;background:#fff}
.ic{display:block;flex:none;overflow:visible}
.caret{display:inline-block;width:0;height:0;border-left:3.5px solid transparent;border-right:3.5px solid transparent;border-top:4px solid #333;flex:none}
.qbar{height:17px;flex:none;display:flex;align-items:center;overflow:hidden;position:relative;background:#fff}
.nx{width:38px;flex:none;font:700 24px/17px "Liberation Sans",sans-serif;color:#6f8599;padding-left:3px;box-sizing:border-box;margin-top:-7px}
.qi{flex:none;display:flex;justify-content:center;align-items:center;height:17px}
.qsep{width:1px;height:17px;background:#ddd}
.qt{font-size:11px;white-space:nowrap;margin-top:-8px;color:#333}
.wtitle{position:absolute;left:1043px;top:-4px;font:11.5px/16px "Noto Sans CJK SC",sans-serif;color:#333;white-space:nowrap}
.tabs{height:28px;flex:none;display:flex;background:#d9d9d9;font-size:13px}
.filetab{width:81px;background:#5a9fb9;color:#fff;display:flex;align-items:center;justify-content:center}
.tabgap{width:1px;background:#eee}
.tab{display:flex;align-items:center;justify-content:center;flex:none}
.tab.on{background:#fff;color:#1a7f9c}
.ribbon{height:93px;flex:none;display:flex;padding-top:5px;box-sizing:border-box;border-bottom:1px solid #dcdcdc;background:#fff}
.sec{flex:none;height:84px;box-sizing:border-box;border-right:1px solid #e3e3e3;display:flex;flex-direction:column}
.s1{width:178px}.s2{width:358px}.s3{width:171px}.s4{width:104px}.s5{width:52px}.s5b{width:58px}.s8{width:98px}.s9{width:29px}.s10{width:289px}.s11{width:42px}.s12{width:181px}
.body{height:72px;flex:none;display:flex;box-sizing:border-box}
.s1 .body{padding-left:9px}.s2 .body{padding-left:9px}.s3 .body{padding-left:8px}.s4 .body,.s5 .body,.s5b .body,.s8 .body,.s10 .body{padding-left:4px}.s9 .body{padding-left:2px}.s12 .body{padding-left:7px}
.stitle{height:15px;display:flex;align-items:center;padding:0 6px 0 2px;color:#16708c;white-space:nowrap;overflow:hidden;line-height:15px}
.stitle span:first-child{flex:1;text-align:center;overflow:hidden}
.stitle .caret{margin:0 2px 0 3px}
.big{display:flex;flex-direction:column;align-items:center;flex:none}
.w40{width:40px}.w39{width:39px}.w36{width:36px}.w42{width:42px}.w56{width:56px}
.bigicon{height:32px;display:flex;align-items:center;justify-content:center}
.lbl{margin-top:4px;line-height:16px;white-space:nowrap;height:16px}
.big .caret{margin-top:3px}
.dim{color:#bdbdbd}
.gallery{margin-left:8px;width:99px;height:65px;box-sizing:border-box;border:1px solid #dcdcdc;display:grid;grid-template-columns:repeat(3,1fr);grid-template-rows:1fr 1fr;place-items:center}
.scroll{width:18px;display:flex;flex-direction:column;align-items:center;gap:17px;padding-top:8px}
.up{width:0;height:0;border-left:3.5px solid transparent;border-right:3.5px solid transparent;border-bottom:4px solid #bbb}
.bar{position:relative;margin-top:1px}
.bar::before{content:"";position:absolute;left:-3.5px;top:-7px;width:7px;height:1px;background:#333}
.col{flex:none;margin-top:-4px;display:flex;flex-direction:column}
.c44{width:72px;margin-left:5px}.c33{width:55px;margin-left:4px}.c44b{width:66px;margin-left:3px}.c44c{margin-left:5px}
.sm{height:22px;display:flex;align-items:center;gap:3px;white-space:nowrap}
.caret.inl{margin-left:6px}
.morebox{width:36px;height:33px;box-sizing:border-box;border:1px solid #dcdcdc;border-radius:4px;display:flex;align-items:center;justify-content:center}
.morebox+.lbl{margin-top:3px}
.s2 .w36{margin-left:12px}.s3 .w36{margin-left:12px}
.igrid{margin-top:1px}
.irow{display:flex;height:30px;align-items:center}
.cell{width:23px;display:flex;justify-content:center;flex:none}
.isep{width:1px;height:22px;background:#ddd;margin:0 3px;flex:none}
.toolbar{height:30px;padding-top:1px;flex:none;display:flex;align-items:center;border-bottom:2px solid #a8a8a8;box-sizing:content-box;background:#fff}
.tmenu{display:flex;align-items:center;margin-left:8px;gap:3px;width:74px;flex:none;white-space:nowrap}
.tmenu .caret{margin-left:2px}
.tsep{width:1px;height:22px;background:#ddd;margin-left:4px}
.sel{box-sizing:border-box;height:20px;border:1px solid #999;display:flex;align-items:center;justify-content:space-between;padding:0 6px 0 3px;flex:none;background:#fff;font-size:11.5px;white-space:nowrap}
.s-a{width:133px;margin-left:11px}.s-b{width:139px;margin-left:9px}
.ti{flex:none;display:flex;justify-content:center;align-items:center;height:22px;box-sizing:border-box}
.ti.act{background:#c8e3ea;outline:1px solid #b7d7df}
.tline{width:1px;height:22px;background:#ccc}
.work{flex:1;display:flex;min-height:0}
.rail{width:33px;flex:none;background:#dcdcdc;border-right:1px solid #aaa;box-sizing:border-box;display:flex;flex-direction:column;overflow:hidden}
.ri{display:flex;justify-content:center;align-items:center;flex:none;height:32px;width:32px}
.ri.act{height:46px;width:31px;background:#fff;margin-left:2px;border:1px solid #bbb;border-right:0;box-sizing:border-box;margin-right:-1px}
.nav{width:331px;flex:none;border-right:1px solid #aaa;box-sizing:border-box;display:flex;flex-direction:column;padding-left:6px;background:#fff;overflow:hidden;padding-right:10px}
.navhead{height:29px;flex:none;display:flex;align-items:center;justify-content:space-between;padding:0 6px 0 3px;font-size:12px}
.table{position:relative;border-left:1px solid #ddd;border-top:1px solid #ddd;flex:1;overflow:hidden;font-size:12px}
.thead,.tr{display:flex;height:20px;box-sizing:border-box}
.thead{background:#f3f3f3;border-bottom:1px solid #ddd;align-items:center;color:#444}
.tr{border-bottom:1px solid #e8e8e8}
.tr:nth-child(odd){background:#f9f9f9}
.c1{width:200px;flex:none;box-sizing:border-box;border-right:1px solid #ddd;height:100%;display:flex;align-items:center;padding-left:6px}
.c2{width:100px;flex:none;box-sizing:border-box;border-right:1px solid #ddd;height:100%;display:flex;align-items:center;padding-left:6px}
.c3{width:14px;flex:none;padding-left:5px;overflow:hidden;white-space:nowrap}
.sortup{width:0;height:0;border-left:5px solid transparent;border-right:5px solid transparent;border-bottom:5px solid #222;margin-left:18px}
.node{display:flex;align-items:center;white-space:nowrap;gap:1px;margin-left:-1px;height:20px}
.node.l1{margin-left:34px}
.exp{width:9px;height:9px;box-sizing:border-box;border:1px solid #bbb;background:#fff;display:flex;align-items:center;justify-content:center;font:10px/8px "Liberation Sans",sans-serif;margin-right:3px;color:#222}
.cbox{width:12px;height:12px;box-sizing:border-box;border:1px solid #222;display:flex;align-items:center;justify-content:center;background:#fff;margin-right:1px}
.bold{font-weight:700}
.links{position:absolute;left:0;top:20px;pointer-events:none}
.view{flex:1;position:relative;overflow:hidden;background:linear-gradient(#b6b6b6,#e6e6e6)}
.scene{position:absolute;left:0;top:0}
.ax{font:12px "Liberation Sans",sans-serif}
.file{height:22px;background:#fff;position:relative;display:flex}
.ftab{width:133px;background:#5a9fb9;color:#fff;display:flex;align-items:center;gap:3px;padding-left:7px;box-sizing:border-box;font-size:13px;margin-left:-1px}
.ftab span{color:#fff;font-family:"Open Sans",sans-serif}
.dialog{position:absolute;left:-1px;top:22px;width:329px;height:269px;background:#f0f0f0;border-right:1px solid #bbb;box-sizing:border-box}
.dhead{height:25px;background:#5a9fb9;color:#fff;display:flex;align-items:center;padding-left:6px;gap:9px;font-size:13px}
.dbtns{margin-left:auto;display:flex;gap:6px;margin-right:6px;align-items:center}
.card{margin:0 6px;background:#fff;border-bottom:1px solid #ccc;box-sizing:border-box;position:relative}
.c-a{margin-top:4px;height:65px;padding:0 7px}
.c-b{margin-top:4px;height:70px}.c-c{margin-top:4px;height:23px}.c-d{margin-top:4px;height:23px}
.chead{height:29px;padding-bottom:4px;box-sizing:border-box;display:flex;align-items:center;justify-content:space-between;color:#15708c;font-size:14px;padding-right:1px}
.chev{width:7px;height:7px;border-left:2px solid #15708c;border-top:2px solid #15708c;transform:rotate(45deg);margin-top:4px;margin-right:2px}
.chev.small{position:absolute;right:2px;top:11px;width:5px;height:5px}
.chev.down{transform:rotate(225deg);top:4px}
.peek{position:absolute;left:7px;top:5px;width:9px;height:14px;overflow:hidden;color:#15708c;white-space:nowrap}
.combo{height:25px;margin:1px 3px 0 2px;border:1px solid #999;box-sizing:border-box;display:flex;align-items:center;padding-left:6px;gap:3px;font-size:12px;background:#fff}
.combo .caret{margin-left:auto;margin-right:6px}
.menu{position:absolute;left:15px;top:106px;width:298px;height:203px;box-sizing:border-box;border:1px solid #a6a6a6;background:#fff;font-size:12px}
.mi{height:20px;display:flex;align-items:center;gap:1px;padding-left:4px;white-space:nowrap}
.mi.hl{background:#b1d7e1}
.mark{position:absolute;right:11px;bottom:9px;font:16px "Liberation Sans",sans-serif;color:rgba(140,140,140,.6)}
</style>
